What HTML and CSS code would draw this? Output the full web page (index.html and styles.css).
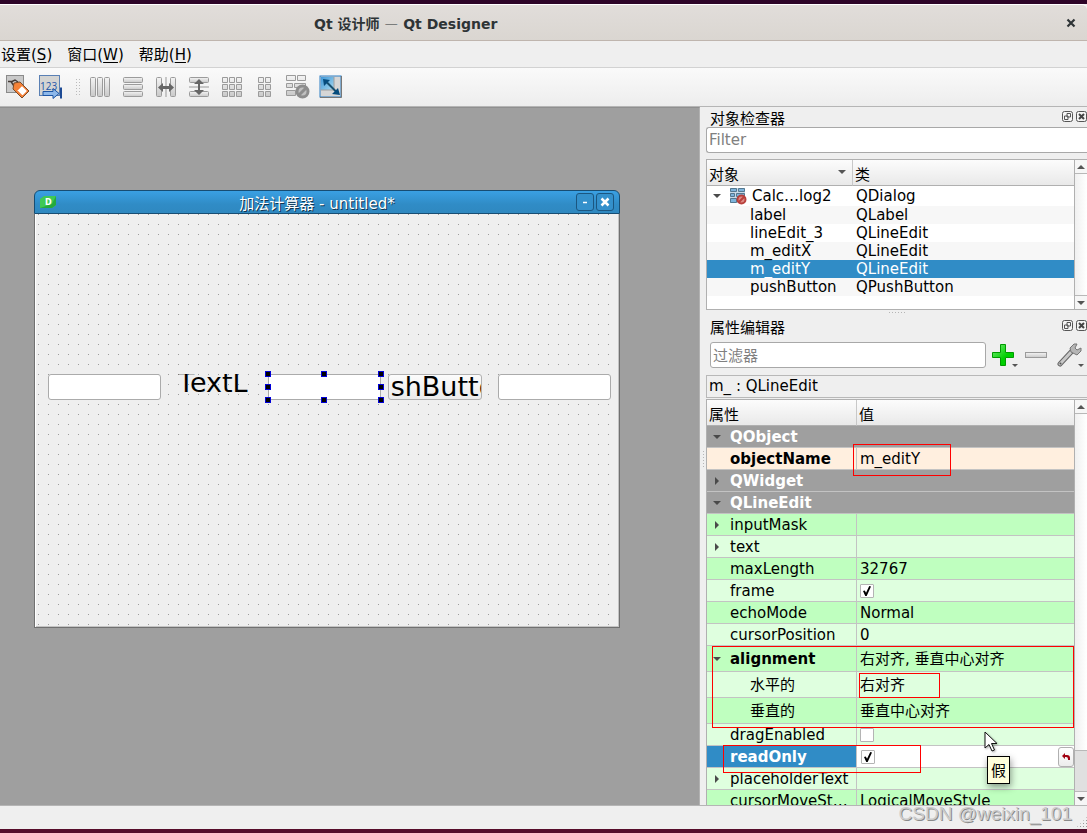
FILE: index.html
```
<!DOCTYPE html>
<html lang="zh-CN">
<head>
<meta charset="utf-8">
<title>Qt 设计师 — Qt Designer</title>
<link rel="stylesheet" href="styles.css">
</head>
<body>
<svg class="defs" aria-hidden="true">
  <defs>
    <linearGradient id="bar" x1="0" y1="0" x2="0" y2="1"><stop offset="0" stop-color="#f4f4f4"/><stop offset="1" stop-color="#c9c9c9"/></linearGradient>
    <linearGradient id="sky" x1="0" y1="0" x2="1" y2="1"><stop offset="0" stop-color="#3f98d8"/><stop offset="1" stop-color="#a9d8ee"/></linearGradient>
    <linearGradient id="plus" x1="0" y1="0" x2="1" y2="1"><stop offset="0" stop-color="#7df07d"/><stop offset=".6" stop-color="#00cf00"/></linearGradient>
    <symbol id="restore" viewBox="0 0 12 12"><rect x=".5" y=".5" width="10" height="10" rx="2" fill="#f4f4f4" stroke="#555"/><path d="M5 2.500h3.500V6H5zM2.500 5H6v3.500H2.500z" fill="#f4f4f4" stroke="#555"/></symbol>
    <symbol id="shut" viewBox="0 0 12 12"><rect x=".5" y=".5" width="10" height="10" rx="2" fill="#f4f4f4" stroke="#555"/><path d="M3 3l5 5M8 3L3 8" stroke="#444" stroke-width="2"/></symbol>
  </defs>
</svg>

<header class="titlebar">
  <h1>Qt 设计师 <span>—</span> Qt Designer</h1>
  <button class="win-close" aria-label="关闭"><svg width="10" height="10" viewBox="0 0 10 10"><path d="M1.500 1.500l7 7M8.500 1.500l-7 7" stroke="#2e3436" stroke-width="2.200"/></svg></button>
</header>

<nav class="menubar">
  <button>设置(<u>S</u>)</button>
  <button>窗口(<u>W</u>)</button>
  <button>帮助(<u>H</u>)</button>
</nav>

<div class="toolbar">
  <button aria-label="编辑伙伴"><svg viewBox="0 0 24 24"><rect x=".5" y=".5" width="17" height="17" fill="#c9c9c9" stroke="#8a8a8a"/><path d="M2 6.500h4l3-1.500 3 2M5 6.500l4 6" fill="none" stroke="#443a36" stroke-width="1.500"/><path d="M8 8l6-1 9 9-7 7-9-9z" fill="#f58238" stroke="#7a4a28"/><path d="M11 15.500l5-5 5.500 5.500-5 5z" fill="#fff" stroke="#f06a18"/></svg></button>
  <button aria-label="编辑 Tab 顺序"><svg viewBox="0 0 24 24"><rect x=".5" y=".5" width="20" height="20" fill="#d4d4d2" stroke="#5a80b4"/><text x="1" y="15" class="digits">123</text><path d="M4 16.500h10v-3l6 5-6 5v-3H4z" fill="#8db8ea" stroke="#1d55a4"/><path d="M22 12.500v11" stroke="#1d4a94" stroke-width="2"/></svg></button>
  <span class="grip"></span>
  <button aria-label="水平布局"><svg viewBox="0 0 24 24"><g fill="url(#bar)" stroke="#9b9b9b"><rect x="2.500" y="2.500" width="5" height="19" rx="1"/><rect x="9.500" y="2.500" width="5" height="19" rx="1"/><rect x="16.500" y="2.500" width="5" height="19" rx="1"/></g></svg></button>
  <button aria-label="垂直布局"><svg viewBox="0 0 24 24"><g fill="url(#bar)" stroke="#9b9b9b"><rect x="2.500" y="2.500" width="19" height="5" rx="1"/><rect x="2.500" y="9.500" width="19" height="5" rx="1"/><rect x="2.500" y="16.500" width="19" height="5" rx="1"/></g></svg></button>
  <button aria-label="水平分裂器"><svg viewBox="0 0 24 24"><g fill="url(#bar)" stroke="#9b9b9b"><rect x="2.500" y="2.500" width="5" height="19" rx="1"/><rect x="16.500" y="2.500" width="5" height="19" rx="1"/></g><path d="M12 2v20" stroke="#999"/><path d="M4 12.500l5-4.500v3h6V8l5 4.500-5 4.500v-3H9v3z" fill="#666"/></svg></button>
  <button aria-label="垂直分裂器"><svg viewBox="0 0 24 24"><g fill="url(#bar)" stroke="#9b9b9b"><rect x="2.500" y="2.500" width="19" height="5" rx="1"/><rect x="2.500" y="16.500" width="19" height="5" rx="1"/></g><path d="M2 12h20" stroke="#999"/><path d="M12 4l5 5h-4v6h4l-5 5-5-5h4V9H7z" fill="#666"/></svg></button>
  <button aria-label="栅格布局"><svg viewBox="0 0 24 24"><g fill="url(#bar)" stroke="#9b9b9b"><path d="M2.500 2.500h5v5h-5zM9.500 2.500h5v5h-5zM16.500 2.500h5v5h-5zM2.500 9.500h5v5h-5zM9.500 9.500h5v5h-5zM16.500 9.500h5v5h-5zM2.500 16.500h5v5h-5zM9.500 16.500h5v5h-5zM16.500 16.500h5v5h-5z"/></g></svg></button>
  <button aria-label="表单布局"><svg viewBox="0 0 24 24"><g fill="url(#bar)" stroke="#9b9b9b"><path d="M5.500 2.500h5v5h-5zM12.500 2.500h5v5h-5zM5.500 9.500h5v5h-5zM12.500 9.500h5v5h-5zM5.500 16.500h5v5h-5zM12.500 16.500h5v5h-5z"/></g></svg></button>
  <button aria-label="打破布局"><svg viewBox="0 0 24 24"><g fill="url(#bar)" stroke="#9b9b9b"><path d="M.5.500h9v5h-9zM11.500.500h8v5h-8zM.5 8.500h6v4h-6zM8.500 8.500h11v4h-11zM.5 15.500h9v5h-9zM11.500 15.500h8v5h-8z"/></g><circle cx="16.500" cy="16.500" r="5.500" fill="#c0c0c0" stroke="#8d8d8d" stroke-width="3"/><path d="M13 20l7-7" stroke="#8d8d8d" stroke-width="3"/></svg></button>
  <button aria-label="调整大小"><svg viewBox="0 0 24 24"><rect x="1" y="1" width="21" height="21" fill="#d6d6d6" stroke="#2d7ec4"/><rect x="2" y="2" width="13" height="13" fill="url(#sky)"/><path d="M15 2v13H2" fill="none" stroke="#9e9e9e"/><path d="M22.500 1v21.500H1" fill="none" stroke="#777"/><path d="M8 7.500l10 10" stroke="#174f6e" stroke-width="2"/><path d="M4 4l7 1-6 6zM21 20l-8-1 6-6z" fill="#064c7d"/></svg></button>
</div>

<main class="main">
  <section class="workspace">
    <div class="form-window">
      <div class="form-title">
        <svg width="16" height="12" viewBox="0 0 16 12"><path d="M0 3l4-3h12v9l-4 3H0z" fill="#3fc955"/><path d="M0 12l12-4 4-8v9l-4 3z" fill="#25a93c"/><text x="5" y="9" class="logo-letter">D</text></svg>
        <h2>加法计算器 - untitled*</h2>
        <button aria-label="最小化"><svg width="10" height="10" viewBox="0 0 10 10"><path d="M3 5.500h4" stroke="#fff" stroke-width="1.500"/></svg></button>
        <button aria-label="关闭"><svg width="10" height="10" viewBox="0 0 10 10"><path d="M1.500 1.500l7 7M8.500 1.500l-7 7" stroke="#fff" stroke-width="2.500"/></svg></button>
      </div>
      <div class="form-canvas">
        <input class="widget edit-x" aria-label="m_editX">
        <div class="widget text-label">TextLabel</div>
        <div class="widget edit-y"><input aria-label="m_editY"><i class="h n w"></i><i class="h n c"></i><i class="h n e"></i><i class="h m w"></i><i class="h m e"></i><i class="h s w"></i><i class="h s c"></i><i class="h s e"></i></div>
        <button class="widget push">PushButton</button>
        <input class="widget edit-3" aria-label="lineEdit_3">
      </div>
    </div>
  </section>

  <aside class="dock">
    <span class="side-grip"></span>
    <div class="dock-title"><h2>对象检查器</h2><button aria-label="浮动"><svg><use href="#restore"/></svg></button><button aria-label="关闭"><svg><use href="#shut"/></svg></button></div>
    <input class="filter wide" placeholder="Filter" aria-label="Filter">
    <div class="view inspector">
      <table>
        <thead><tr><th class="sorted">对象</th><th>类</th></tr></thead>
        <tbody>
          <tr class="root"><td><span class="arrow open"></span><svg class="node" viewBox="0 0 17 17"><path d="M0 0h15v15H0z" fill="#c9dbe8"/><g fill="#7db4dc" stroke="#55788f"><path d="M.5.500h6v3h-6zM8.500.500h6v3h-6zM.5 5.500h4v3h-4zM6.500 5.500h8v3h-8zM.5 10.500h6v4h-6z"/></g><circle cx="11.500" cy="11.500" r="4" fill="#dd8a85" stroke="#b8403c" stroke-width="2"/><path d="M9 14l5-5" stroke="#b8403c" stroke-width="2"/></svg>Calc…log2</td><td>QDialog</td></tr>
          <tr><td>label</td><td>QLabel</td></tr>
          <tr><td>lineEdit_3</td><td>QLineEdit</td></tr>
          <tr><td>m_editX</td><td>QLineEdit</td></tr>
          <tr class="current"><td>m_editY</td><td>QLineEdit</td></tr>
          <tr><td>pushButton</td><td>QPushButton</td></tr>
        </tbody>
      </table>
      <div class="scroll"><span class="up"></span><span class="down"></span></div>
    </div>
    <div class="splitter"><span></span></div>
    <div class="dock-title"><h2>属性编辑器</h2><button aria-label="浮动"><svg><use href="#restore"/></svg></button><button aria-label="关闭"><svg><use href="#shut"/></svg></button></div>
    <div class="filter-row">
      <input class="filter" placeholder="过滤器" aria-label="过滤器">
      <button aria-label="添加"><svg viewBox="0 0 27 26"><path d="M9.500 2.500h5v8h8v5h-8v8h-5v-8h-8v-5h8z" fill="url(#plus)" stroke="#009a00"/><path d="M21 22h6l-3 3z" fill="#555"/></svg></button>
      <button aria-label="移除"><svg viewBox="0 0 27 26"><rect x="1.500" y="10.500" width="21" height="5" fill="url(#bar)" stroke="#9a9a9a"/></svg></button>
      <button aria-label="配置"><svg viewBox="0 0 27 26"><path d="M3 22L16 8" stroke="#666" stroke-width="5" stroke-linecap="round"/><path d="M3 22L16 8" stroke="#c8c8c8" stroke-width="3" stroke-linecap="round"/><path d="M14 10l-1-4 4-4 3 0-2 4 2 2 4-2 0 3-4 4z" fill="#b5b5b5" stroke="#777"/><circle cx="3.500" cy="21.500" r="1" fill="#555"/><path d="M21 22h6l-3 3z" fill="#555"/></svg></button>
    </div>
    <div class="class-name">m_ : QLineEdit</div>
    <div class="view properties">
      <div class="rows">
      <table>
        <thead><tr><th>属性</th><th>值</th></tr></thead>
        <tbody>
          <tr class="group"><td colspan="2"><span class="arrow open"></span>QObject</td></tr>
          <tr class="peach"><td><b>objectName</b></td><td>m_editY</td></tr>
          <tr class="group"><td colspan="2"><span class="arrow"></span>QWidget</td></tr>
          <tr class="group"><td colspan="2"><span class="arrow open"></span>QLineEdit</td></tr>
          <tr class="deep"><td><span class="arrow"></span>inputMask</td><td></td></tr>
          <tr><td><span class="arrow"></span>text</td><td></td></tr>
          <tr class="deep"><td>maxLength</td><td>32767</td></tr>
          <tr><td><label for="frame">frame</label></td><td><input type="checkbox" id="frame" checked></td></tr>
          <tr class="deep"><td>echoMode</td><td>Normal</td></tr>
          <tr><td>cursorPosition</td><td>0</td></tr>
          <tr class="deep tall"><td><span class="arrow open"></span><b>alignment</b></td><td>右对齐, 垂直中心对齐</td></tr>
          <tr class="tall sub"><td>水平的</td><td>右对齐</td></tr>
          <tr class="deep tall sub"><td>垂直的</td><td>垂直中心对齐</td></tr>
          <tr><td><label for="drag">dragEnabled</label></td><td><input type="checkbox" id="drag"></td></tr>
          <tr class="editing"><td><label for="ro"><b>readOnly</b></label></td><td><div class="editor"><input type="checkbox" id="ro" checked><button aria-label="重置"><svg width="8" height="8" viewBox="0 0 8 8"><path d="M0 3l3-3v2h2q3 0 3 3v2H6V6q0-2-2-2H3v2z" fill="#a00010"/></svg></button></div></td></tr>
          <tr><td><span class="arrow"></span>placeholderText</td><td></td></tr>
          <tr class="deep"><td>cursorMoveSt…</td><td>LogicalMoveStyle</td></tr>
        </tbody>
      </table>
      </div>
      <div class="scroll long"><span class="up"></span><span class="trough"></span><span class="down"></span></div>
      <span class="mark mark-name"></span>
      <span class="mark mark-align"></span>
      <span class="mark mark-right"></span>
      <span class="mark mark-ro"></span>
      <svg class="pointer" viewBox="0 0 14 21"><path d="M1 1v16l4-3.500 3 6.500 2.500-1-3-6.500H13z" fill="#fff" stroke="#111"/></svg>
      <div class="tip" role="tooltip">假</div>
    </div>
  </aside>
</main>

<footer class="status"><span class="watermark">CSDN @weixin_101</span><span class="size-grip"></span></footer>
</body>
</html>
```
FILE: styles.css
```
* { box-sizing: border-box; }
html, body { height: 100%; }
body {
  margin: 0;
  display: flex;
  flex-direction: column;
  overflow: hidden;
  background: #efefef;
  color: #000;
  font: 15px/18px "DejaVu Sans", "Noto Sans CJK SC", sans-serif;
  border-top: 4px solid #2d0428;
  border-bottom: 4px solid #560d2b;
}
h1, h2 { margin: 0; font: inherit; }
button { margin: 0; padding: 0; border: 0; background: none; font: inherit; color: inherit; }
svg { display: block; }
.defs { position: absolute; width: 0; height: 0; }

.titlebar {
  flex: none;
  height: 37px;
  display: flex;
  align-items: center;
  padding: 0 11px 0 314px;
  justify-content: space-between;
  background: linear-gradient(#e1ddda, #dad6d1);
  border-top: 1px solid #fff;
  border-bottom: 1px solid #bfb5ae;
  border-radius: 0 5px 0 0;
}
.titlebar h1 { padding-top: 2px; font-size: 14px; font-weight: bold; color: #2e3436; }
.titlebar h1 span { font-family: "Noto Sans CJK SC", sans-serif; font-weight: 300; }

.menubar { flex: none; height: 27px; display: flex; align-items: center; gap: 15px; padding: 1px 0 0 1px; border-bottom: 1px solid #d2d2d2; }
.menubar u { text-underline-offset: 2px; }

.toolbar { flex: none; height: 39px; display: flex; align-items: center; padding-left: 1px; background: linear-gradient(#fafafa, #ededed); border-bottom: 1px solid #b5b5b5; }
.toolbar button { width: 33px; display: grid; place-items: center; }
.toolbar svg { width: 24px; height: 24px; }
.grip { width: 5px; height: 17px; margin: 0 2px 0 9px; background: conic-gradient(from 270deg at 1px 1px, #bbb 90deg, transparent 0) 0 0 / 3px 3px; }
.digits { font: 10px "Open Sans", sans-serif; fill: #1c55a8; }
.logo-letter { font: bold 8px "DejaVu Sans", sans-serif; fill: #fff; }

.main { flex: 1; min-height: 0; display: flex; }
.workspace { position: relative; flex: 1; overflow: hidden; background: #9f9f9f; border: 1px solid #8f8f8f; border-width: 1px 1px 0 0; border-right-color: #b2b2b2; }

.form-window { position: absolute; left: 34px; top: 82px; width: 586px; height: 438px; display: flex; flex-direction: column; }
.form-title {
  flex: none;
  height: 24px;
  display: flex;
  align-items: center;
  gap: 2px;
  padding: 0 5px;
  color: #fff;
  background: linear-gradient(#3aa0e3, #308cc6 60%, #2f88c0);
  border: 1px solid #174d73;
  border-radius: 6px 6px 0 0;
}
.form-title h2 { flex: 1; text-align: center; padding: 3px 0 0 2px; text-shadow: 1px 1px 0 #12354f; }
.form-title button { width: 18px; height: 18px; display: grid; place-items: center; border: 1px solid #1b5680; border-radius: 3px; background: #3490cb; }
.form-canvas {
  position: relative;
  flex: 1;
  border: 1px solid #707070;
  border-top: 0;
  box-shadow: inset 1px 0 #fff, inset -1px -1px #c4c4c4;
  background: conic-gradient(from 270deg at 1px 1px, #9c9c9c 90deg, transparent 0) 3px 0 / 10px 10px #efefef;
}
.widget { position: absolute; top: 160px; height: 26px; }
.widget, .edit-y input { font-size: 27px; }
input { font: inherit; }
.form-canvas input { width: 113px; height: 26px; padding: 0 4px; background: #fff; border: 1px solid #ababab; border-radius: 3px; }
.edit-x { left: 13px; }
.text-label { left: 143px; width: 70px; line-height: 18px; overflow: hidden; }
.edit-y { left: 233px; width: 113px; }
.edit-y input { display: block; }
.h { position: absolute; width: 6px; height: 6px; margin: -3px; background: #000; border: 1px solid #0000d8; }
.n { top: 0; } .m { top: 50%; } .s { top: 100%; }
.w { left: 0; } .c { left: 56px; } .e { left: 100%; }
.push { left: 353px; width: 94px; display: flex; align-items: center; justify-content: center; overflow: hidden; border: 1px solid #b0b0b0; border-radius: 3px; background: linear-gradient(#fcfcfc, #ebebeb); }
.edit-3 { left: 463px; }

.dock { position: relative; width: 387px; flex: none; display: flex; flex-direction: column; padding-left: 6px; }
.side-grip { position: absolute; left: 3px; top: 344px; width: 1px; height: 16px; background: repeating-linear-gradient(#b5b5b5 0 1px, transparent 1px 3px); }
.dock-title { flex: none; height: 20px; display: flex; align-items: center; padding-left: 4px; }
.dock-title h2 { flex: 1; padding-top: 3px; }
.dock-title button { width: 14px; }
.dock-title button:last-child { width: 11px; }
.dock-title svg { width: 12px; height: 12px; }
.filter { min-width: 0; height: 26px; padding: 0 2px; background: #fff; border: 1px solid #a8a8a8; border-radius: 3px; }
.filter::placeholder { color: #808080; opacity: 1; }
.wide { border-right: 0; border-radius: 3px 0 0 3px; }

.view { position: relative; display: grid; grid-template-columns: minmax(0, 1fr) 13px; border: 1px solid #b0b0b0; border-right: 0; background: #fff; }
.inspector { margin-top: 6px; }
.inspector table { margin-bottom: 13px; }
table { width: 100%; table-layout: fixed; border-collapse: separate; border-spacing: 0; }
th { height: 26px; padding: 4px 2px 0; text-align: left; font-weight: normal; background: linear-gradient(#fcfcfc, #e9e9e9); border-bottom: 1px solid #b0b0b0; }
th:first-child { width: 146px; border-right: 1px solid #c8c8c8; }
.sorted { position: relative; }
.sorted::after { content: ""; position: absolute; right: 6px; top: 10px; border: 4px solid transparent; border-top: 4px solid #555; border-bottom: 0; }
td { position: relative; padding: 0; white-space: nowrap; }
.inspector td { height: 18px; line-height: 18px; padding-left: 3px; }
.inspector td:first-child { padding-left: 43px; }
.inspector .root td { height: 20px; }
.inspector .root td:first-child { padding-left: 45px; }
.inspector tbody tr:nth-child(even) { background: #f7f7f7; }
.inspector tbody .current { background: #308cc6; color: #fff; }
.node { position: absolute; left: 23px; top: 2px; width: 17px; height: 17px; }
.arrow { position: absolute; left: 8px; top: 50%; margin-top: -4px; border: 4px solid transparent; border-left: 4px solid #4a4a4a; border-right: 0; }
.arrow.open { left: 6px; margin-top: -2px; border: 4px solid transparent; border-top: 4px solid #4a4a4a; border-bottom: 0; }

.scroll { display: flex; flex-direction: column; justify-content: space-between; border-left: 1px solid #b0b0b0; background: linear-gradient(90deg, #f0f0f0, #fff); }
.up, .down { height: 14px; display: grid; place-items: center; background: #f6f6f6; border: 0 solid #b8b8b8; }
.up { border-bottom-width: 1px; }
.down { border-top-width: 1px; }
.up::after, .down::after { content: ""; border: 4px solid transparent; }
.up::after { border-bottom: 4px solid #555; border-top: 0; }
.down::after { border-top: 4px solid #555; border-bottom: 0; }
.trough { height: 41px; margin-top: auto; background: #e0e0e0; border-top: 1px solid #b8b8b8; }

.splitter { flex: none; height: 6px; display: grid; justify-content: center; padding-top: 2px; }
.splitter span { width: 16px; height: 1px; background: repeating-linear-gradient(90deg, #b5b5b5 0 1px, transparent 1px 3px); }
.filter-row { flex: none; display: flex; align-items: center; padding: 6px 3px 7px 4px; }
.filter-row .filter { flex: 1; margin-right: 5px; padding-top: 2px; }
.filter-row button { width: 33px; }
.filter-row button:last-child { width: 27px; }
.filter-row svg { width: 27px; height: 26px; }
.class-name { flex: none; height: 23px; padding: 0 2px; line-height: 20px; border: 1px solid #b8b8b8; border-right: 0; margin-bottom: 1px; }

.properties { flex: 1; min-height: 0; border-bottom: 0; }
.rows { overflow: hidden; min-height: 0; }
.long { min-height: 0; }
.properties th:first-child { width: 150px; }
.properties td { height: 22px; line-height: 20px; padding: 1px 0 0 3px; border-bottom: 1px solid #c3c3c3; background: #dfffdf; }
.properties td:first-child { padding-left: 23px; border-right: 1px solid #c3c3c3; }
.properties .deep td { background: #bfffbf; }
.properties .peach td { background: #ffefdf; }
.properties .group td { background: #9f9f9f; color: #fff; font-weight: bold; border-right: 0; }
.properties .tall td { height: 26px; }
.properties .sub td:first-child { padding-left: 43px; }
.properties .editing td { background: #fff; }
.properties .editing td:first-child { background: #308cc6; color: #fff; }
input[type="checkbox"] { appearance: none; display: block; width: 14px; height: 14px; margin: 0; background: #fff; border: 1px solid #b4b4b4; border-radius: 1px; }
input[type="checkbox"]:checked::after { content: ""; display: block; width: 8px; height: 10px; margin: 1px 2px; background: #000; clip-path: polygon(0 50%, 22% 45%, 38% 68%, 78% 0, 100% 4%, 46% 100%, 28% 100%); }
.editor { display: flex; align-items: center; justify-content: space-between; height: 20px; padding-left: 1px; }
.editor button { width: 16px; height: 20px; display: grid; place-items: center; border: 1px solid #b0b0b0; border-radius: 3px; background: linear-gradient(#fff, #ececec); }

.mark { position: absolute; border: 1px solid #f00; }
.mark-name { left: 146px; top: 44px; width: 98px; height: 32px; }
.mark-align { left: 5px; top: 246px; width: 362px; height: 82px; }
.mark-right { left: 152px; top: 273px; width: 81px; height: 25px; }
.mark-ro { left: 16px; top: 345px; width: 198px; height: 28px; }
.pointer { position: absolute; left: 277px; top: 331px; width: 14px; height: 21px; filter: drop-shadow(1px 1px 1px #0005); }
.tip { position: absolute; left: 280px; top: 356px; padding: 5px 3px 3px; background: #ffffdc; border: 1px solid #000; box-shadow: 1px 3px 7px #0006; }

.status { position: relative; flex: none; height: 24px; border-top: 1px solid #b5b5b5; }
.watermark { position: absolute; right: 15px; top: -3px; font: 19px/22px "Liberation Sans", sans-serif; color: #ccc; text-shadow: 1px 1px 0 #8a8a8a; }
.size-grip { position: absolute; right: 0; bottom: 2px; width: 10px; height: 10px; background: conic-gradient(from 270deg at 1px 1px, #999 90deg, transparent 0) 0 0 / 3px 3px; clip-path: polygon(100% 0, 100% 100%, 0 100%); }
```
